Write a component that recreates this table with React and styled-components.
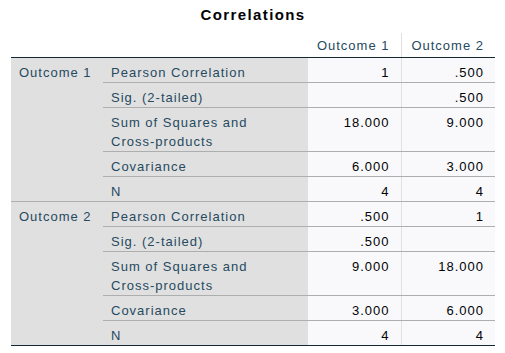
import React from 'react'
import styled, { createGlobalStyle } from 'styled-components'

const rows = [
  {
    group: 'Outcome 1',
    items: [
      { label: 'Pearson Correlation', values: ['1', '.500'] },
      { label: 'Sig. (2-tailed)', values: ['', '.500'] },
      { label: 'Sum of Squares and\nCross-products', values: ['18.000', '9.000'] },
      { label: 'Covariance', values: ['6.000', '3.000'] },
      { label: 'N', values: ['4', '4'] },
    ],
  },
  {
    group: 'Outcome 2',
    items: [
      { label: 'Pearson Correlation', values: ['.500', '1'] },
      { label: 'Sig. (2-tailed)', values: ['.500', ''] },
      { label: 'Sum of Squares and\nCross-products', values: ['9.000', '18.000'] },
      { label: 'Covariance', values: ['3.000', '6.000'] },
      { label: 'N', values: ['4', '4'] },
    ],
  },
]

export default function App() {
  return (
    <>
      <GlobalStyle />
      <Page>
        <Title>Correlations</Title>
        <Table>
          <colgroup>
            <col style={{ width: 92 }} />
            <col style={{ width: 205 }} />
            <col style={{ width: 93 }} />
            <col style={{ width: 94 }} />
          </colgroup>
          <thead>
            <tr>
              <HeadCell />
              <HeadCell />
              <HeadCell divider>Outcome 1</HeadCell>
              <HeadCell>Outcome 2</HeadCell>
            </tr>
          </thead>
          <tbody>
            {rows.map((g, gi) =>
              g.items.map((item, i) => (
                <tr key={gi + '-' + i}>
                  {i === 0 && (
                    <GroupCell rowSpan={g.items.length} last={gi === rows.length - 1}>
                      {g.group}
                    </GroupCell>
                  )}
                  <LabelCell last={i === g.items.length - 1} end={gi === rows.length - 1 && i === g.items.length - 1}>
                    {item.label}
                  </LabelCell>
                  {item.values.map((v, vi) => (
                    <ValueCell
                      key={vi}
                      divider={vi === 0}
                      last={i === g.items.length - 1}
                      end={gi === rows.length - 1 && i === g.items.length - 1}
                    >
                      {v}
                    </ValueCell>
                  ))}
                </tr>
              ))
            )}
          </tbody>
        </Table>
      </Page>
    </>
  )
}

const GlobalStyle = createGlobalStyle`
  body {
    margin: 0;
    background: #ffffff;
    font-family: "Liberation Sans", Arial, sans-serif;
  }
`

const Page = styled.div`
  width: 484px;
  padding: 6px 0 0 11px;
`

const Title = styled.div`
  text-align: center;
  font-size: 15px;
  line-height: 18px;
  font-weight: bold;
  letter-spacing: 1.4px;
  color: #010205;
  margin-bottom: 9px;
`

const Table = styled.table`
  border-collapse: collapse;
  table-layout: fixed;
  width: 484px;
  font-size: 13px;
  letter-spacing: 1px;
`

const HeadCell = styled.th`
  height: 24px;
  padding: 0 11px 0 8px;
  text-align: right;
  font-weight: normal;
  color: #264a60;
  background: #ffffff;
  border-bottom: 1px solid #152935;
  border-right: ${(p) => (p.divider ? '1px solid #e0e0e0' : 'none')};
  white-space: nowrap;
`

const BaseCell = styled.td`
  padding: 5px 11px 0 8px;
  line-height: 19px;
  vertical-align: top;
  white-space: pre-line;
`

const GroupCell = styled(BaseCell)`
  background: #e0e0e0;
  color: #264a60;
  border-bottom: ${(p) => (p.last ? '1px solid #152935' : '1px solid #aeaeae')};
  white-space: nowrap;
`

const LabelCell = styled(BaseCell)`
  background: #e0e0e0;
  color: #264a60;
  border-bottom: ${(p) => (p.end ? '1px solid #152935' : '1px solid #aeaeae')};
`

const ValueCell = styled(BaseCell)`
  background: #f9f9fb;
  color: #010205;
  text-align: right;
  border-bottom: ${(p) => (p.end ? '1px solid #152935' : '1px solid #aeaeae')};
  border-right: ${(p) => (p.divider ? '1px solid #e0e0e0' : 'none')};
`
